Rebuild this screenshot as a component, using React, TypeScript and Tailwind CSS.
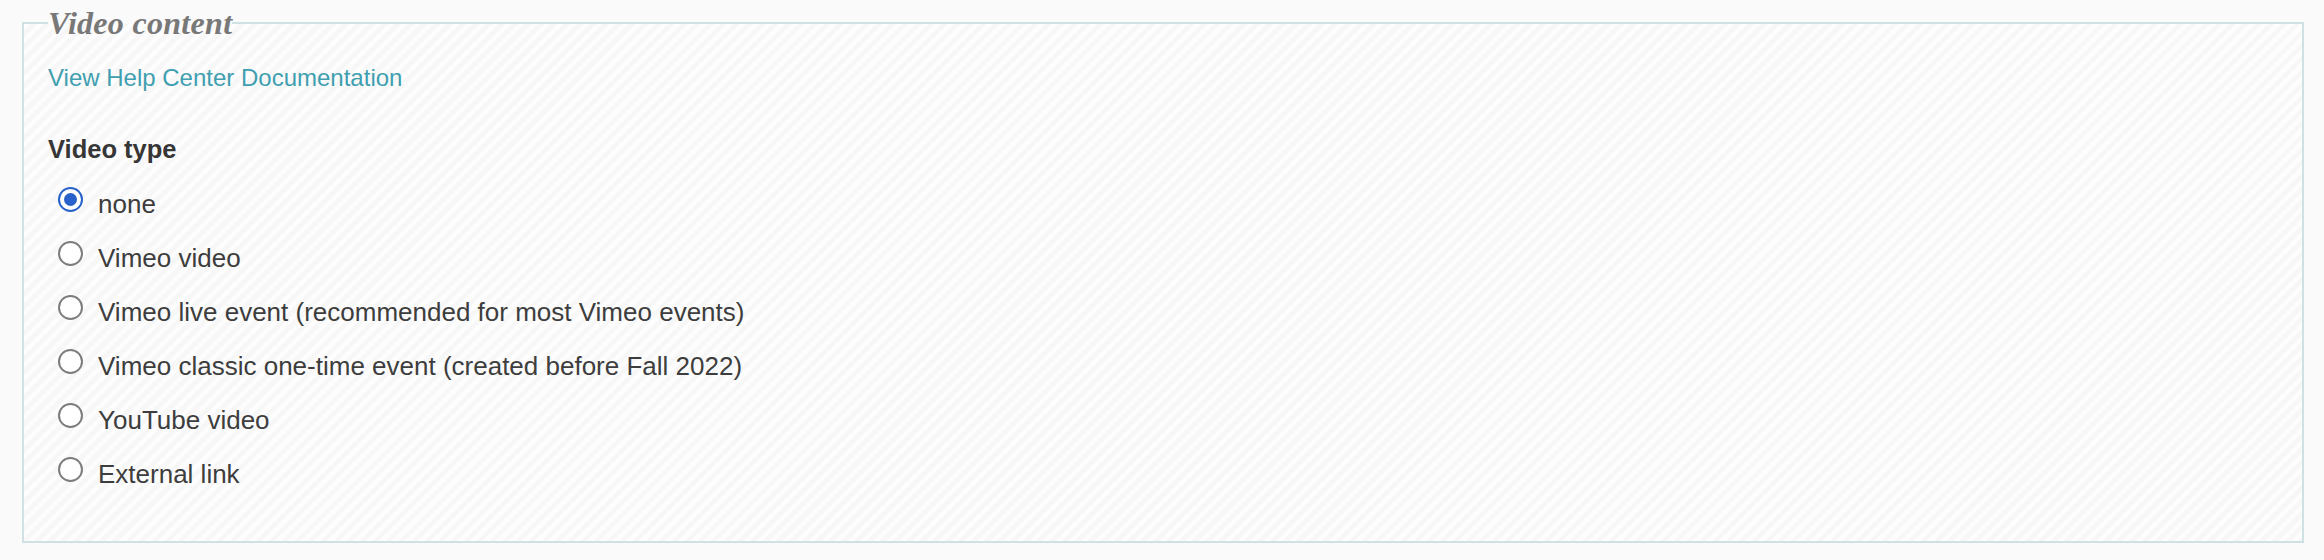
const options = [
  { label: 'none', checked: true },
  { label: 'Vimeo video' },
  { label: 'Vimeo live event (recommended for most Vimeo events)' },
  { label: 'Vimeo classic one-time event (created before Fall 2022)' },
  { label: 'YouTube video' },
  { label: 'External link' },
]

function Radio({ checked }: { checked?: boolean }) {
  if (checked) {
    return (
      <span className="mt-[10.5px] flex h-[25px] w-[25px] shrink-0 items-center justify-center self-start rounded-full border-2 border-[#2861c9] bg-white">
        <span className="h-[13px] w-[13px] rounded-full bg-[#2861c9]" />
      </span>
    )
  }
  return (
    <span className="mt-[10.5px] h-[25px] w-[25px] shrink-0 self-start rounded-full border-2 border-[#7d7d7d] bg-white" />
  )
}

export default function App() {
  return (
    <div className="min-h-[560px] bg-[#fafafa] pl-[22px] pr-[20px] pt-[6px] font-['Liberation_Sans',Arial,sans-serif]">
      <fieldset className="border-2 border-[#cfe1e3] bg-[repeating-linear-gradient(135deg,#fdfdfd_0px,#fdfdfd_4.6px,#f7f7f7_4.6px,#f7f7f7_9.2px)] px-[24px] pb-[40px]">
        <legend className="font-['Liberation_Serif',Georgia,serif] text-[32px] font-bold italic leading-[34px] tracking-[0.3px] text-[#787878]">
          Video content
        </legend>

        <div className="pt-[24px]">
          <a href="#" className="block w-fit text-[24px] leading-[28px] text-[#3f9fb1]">
            View Help Center Documentation
          </a>
        </div>

        <div className="mt-[39px] text-[25.5px] font-bold leading-[36px] text-[#363636]">Video type</div>

        <div className="mt-[9.5px] flex flex-col">
          {options.map((o) => (
            <label key={o.label} className="flex h-[54px] items-start gap-[15px] pl-[10px]">
              <Radio checked={o.checked} />
              <span className="text-[26px] leading-[54px] text-[#3d3d3d]">{o.label}</span>
            </label>
          ))}
        </div>
      </fieldset>
    </div>
  )
}
